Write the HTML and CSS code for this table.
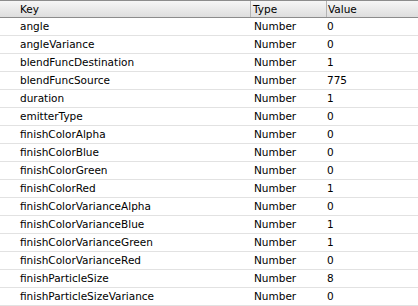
FILE: index.html
```html
<!DOCTYPE html>
<html lang="en">
<head>
  <meta charset="UTF-8" />
  <title>Particle properties</title>
  <link rel="stylesheet" href="styles.css">
</head>
<body>
  <!-- property table -->
  <div class="table">
    <div class="row head">
      <div class="cell key">Key</div>
      <div class="cell type">Type</div>
      <div class="cell value">Value</div>
    </div>
    <div class="row"><div class="cell key">angle</div><div class="cell type">Number</div><div class="cell value">0</div></div>
    <div class="row"><div class="cell key">angleVariance</div><div class="cell type">Number</div><div class="cell value">0</div></div>
    <div class="row"><div class="cell key">blendFuncDestination</div><div class="cell type">Number</div><div class="cell value">1</div></div>
    <div class="row"><div class="cell key">blendFuncSource</div><div class="cell type">Number</div><div class="cell value">775</div></div>
    <div class="row"><div class="cell key">duration</div><div class="cell type">Number</div><div class="cell value">1</div></div>
    <div class="row"><div class="cell key">emitterType</div><div class="cell type">Number</div><div class="cell value">0</div></div>
    <div class="row"><div class="cell key">finishColorAlpha</div><div class="cell type">Number</div><div class="cell value">0</div></div>
    <div class="row"><div class="cell key">finishColorBlue</div><div class="cell type">Number</div><div class="cell value">0</div></div>
    <div class="row"><div class="cell key">finishColorGreen</div><div class="cell type">Number</div><div class="cell value">0</div></div>
    <div class="row"><div class="cell key">finishColorRed</div><div class="cell type">Number</div><div class="cell value">1</div></div>
    <div class="row"><div class="cell key">finishColorVarianceAlpha</div><div class="cell type">Number</div><div class="cell value">0</div></div>
    <div class="row"><div class="cell key">finishColorVarianceBlue</div><div class="cell type">Number</div><div class="cell value">1</div></div>
    <div class="row"><div class="cell key">finishColorVarianceGreen</div><div class="cell type">Number</div><div class="cell value">1</div></div>
    <div class="row"><div class="cell key">finishColorVarianceRed</div><div class="cell type">Number</div><div class="cell value">0</div></div>
    <div class="row"><div class="cell key">finishParticleSize</div><div class="cell type">Number</div><div class="cell value">8</div></div>
    <div class="row"><div class="cell key">finishParticleSizeVariance</div><div class="cell type">Number</div><div class="cell value">0</div></div>
  </div>
</body>
</html>
```

FILE: styles.css
```css
/* base */
html, body {
  margin: 0;
  padding: 0;
  background: #fff;
  font-family: "DejaVu Sans", Verdana, sans-serif;
  font-size: 10.5px;
  color: #000;
  overflow: hidden;
}

/* table grid */
.row {
  display: grid;
  grid-template-columns: 250px 76px 1fr;
  height: 18px;
  box-sizing: border-box;
  border-bottom: 1px solid #e2e2e2;
}

.cell {
  line-height: 17px;
  white-space: nowrap;
  overflow: hidden;
}

.key {
  padding-left: 20px;
}

.type {
  padding-left: 4px;
}

.value {
  padding-left: 1px;
}

/* header row */
.row.head {
  border-top: 1px solid #8c8c8c;
  border-bottom: 1px solid #8c8c8c;
  background: linear-gradient(#f6f6f6, #dedede);
}

.row.head .cell {
  line-height: 16px;
}

.row.head .type,
.row.head .value {
  border-left: 1px solid #b4b4b4;
}

.row.head .type {
  padding-left: 2px;
}
```
